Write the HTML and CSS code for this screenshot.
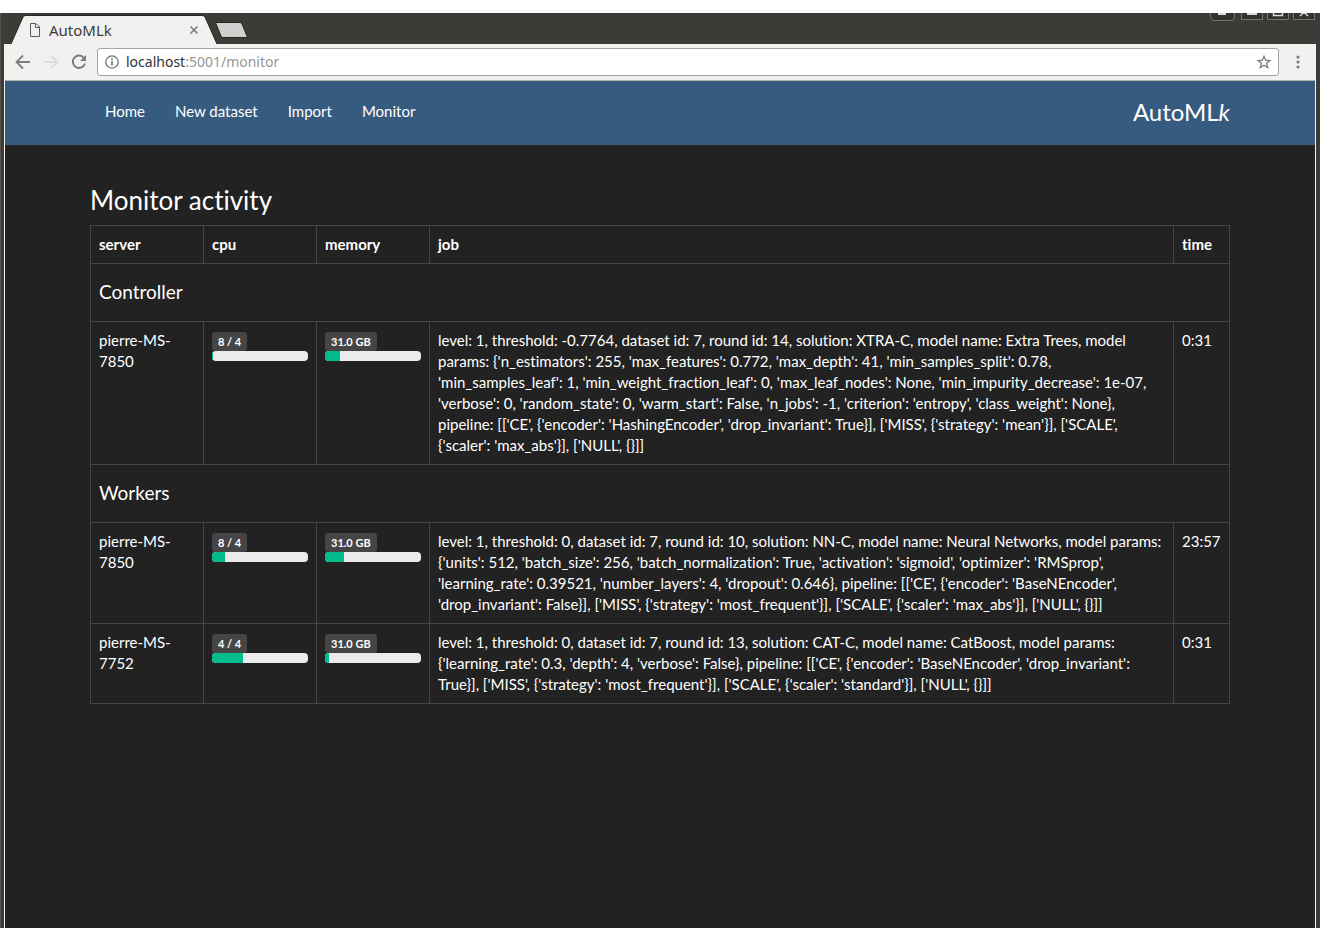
FILE: index.html
```html
<!DOCTYPE html>
<html lang="en">
<head>
<meta charset="utf-8">
<title>AutoMLk</title>
<link rel="stylesheet" href="styles.css">
</head>
<body>
<div class="window">
  <div class="tabstrip">
    <div class="tab">
      <svg class="tab-shape" width="210" height="31" viewBox="0 0 210 31" aria-hidden="true"><path d="M0 31L12 4Q13 2.500 15 2.500H191Q193 2.500 194 4L206 31" fill="#f2f1ef" stroke="#282724" stroke-width="1"/></svg>
      <svg class="tab-doc" width="12" height="16" viewBox="0 0 12 16" aria-hidden="true"><path d="M1.500 1.500H7L10.500 5V14.500H1.500ZM6.500 1.500V5.500H10.500" fill="none" stroke="#5a5a5a"/></svg>
      <span class="tab-title">AutoMLk</span>
      <button class="icon-btn" aria-label="Close tab"><svg width="10" height="10" viewBox="0 0 10 10"><path d="M1.500 1.500L8.500 8.500M8.500 1.500L1.500 8.500" stroke="#7b7a79" stroke-width="1.600"/></svg></button>
    </div>
    <button class="icon-btn new-tab" aria-label="New tab"><svg width="36" height="18" viewBox="0 0 36 18"><path d="M2.500 1.500H27Q28.500 1.500 29 3L34.500 16.500H10Q8.500 16.500 8 15Z" fill="#d0cfcd" stroke="#282724"/></svg></button>
    <svg class="win-buttons" width="106" height="9" viewBox="0 0 106 9" aria-hidden="true">
      <g fill="#33322e" stroke="#77756f"><path d="M.5-2V4Q.5 7.500 4 7.500H21Q24.500 7.500 24.500 4V-2"/><path d="M31.500-2V6.500H52.500V-2M57.500-2V6.500H78.500V-2M83.500-2V6.500H104.500V-2"/></g>
      <path d="M8 1H16M37 1H47" stroke="#dfdbd2" stroke-width="2"/><path d="M63.500-2V2.500H72.500V-2M90 3L94 -1L98 3" fill="none" stroke="#dfdbd2" stroke-width="1.500"/>
    </svg>
  </div>
  <div class="view">
    <div class="toolbar">
      <div class="nav-buttons">
        <button class="icon-btn" aria-label="Back"><svg width="16" height="16" viewBox="0 0 16 16"><path d="M15 8H2M8 1.500L1.500 8L8 14.500" fill="none" stroke="#7d7c7b" stroke-width="1.800"/></svg></button>
        <button class="icon-btn" aria-label="Forward"><svg width="16" height="16" viewBox="0 0 16 16"><path d="M1 8H14M8 1.500L14.500 8L8 14.500" fill="none" stroke="#dddcda" stroke-width="1.800"/></svg></button>
        <button class="icon-btn" aria-label="Reload"><svg width="16" height="16" viewBox="0 0 16 16"><path d="M13 4A6.200 6.200 0 1 0 14 9.500" fill="none" stroke="#7d7c7b" stroke-width="1.900"/><path d="M15 1V7H9Z" fill="#7d7c7b"/></svg></button>
      </div>
      <div class="address">
        <svg width="14" height="14" viewBox="0 0 14 14" aria-hidden="true"><circle cx="7" cy="7" r="6.200" fill="none" stroke="#747372" stroke-width="1.300"/><path d="M7 6V10.500M7 3.300V5" stroke="#747372" stroke-width="1.600"/></svg>
        <span class="url"><span class="host">localhost</span>:5001/monitor</span>
        <button class="icon-btn" aria-label="Bookmark this page"><svg width="14" height="14" viewBox="0 0 14 14"><path d="M7 1.300L8.600 5.200L12.900 5.500L9.600 8.300L10.700 12.500L7 10.200L3.300 12.500L4.400 8.300L1.100 5.500L5.400 5.200Z" fill="none" stroke="#7d7c7b" stroke-width="1.300"/></svg></button>
      </div>
      <button class="icon-btn menu" aria-label="Menu"><svg width="4" height="14" viewBox="0 0 4 14"><g fill="#7d7c7b"><circle cx="2" cy="2" r="1.600"/><circle cx="2" cy="7" r="1.600"/><circle cx="2" cy="12" r="1.600"/></g></svg></button>
    </div>
    <div class="page">
      <header class="navbar">
        <div class="container navbar-row">
          <nav class="links"><a href="#">Home</a><a href="#">New dataset</a><a href="#">Import</a><a href="#">Monitor</a></nav>
          <a class="brand" href="#">AutoML<i>k</i></a>
        </div>
      </header>
      <main class="container">
        <h1>Monitor activity</h1>
        <table class="activity">
          <colgroup><col class="col-narrow"><col class="col-narrow"><col class="col-narrow"><col><col class="col-time"></colgroup>
          <thead><tr><th>server</th><th>cpu</th><th>memory</th><th>job</th><th>time</th></tr></thead>
          <tbody>
            <tr><td colspan="5"><h2>Controller</h2></td></tr>
            <tr>
              <td>pierre-MS-7850</td>
              <td><div class="meter-label"><span class="badge">8 / 4</span></div><div class="progress"><div class="bar" style="width:1%"></div></div></td>
              <td><div class="meter-label"><span class="badge">31.0 GB</span></div><div class="progress"><div class="bar" style="width:16%"></div></div></td>
              <td>level: 1, threshold: -0.7764, dataset id: 7, round id: 14, solution: XTRA-C, model name: Extra Trees, model params: {'n_estimators': 255, 'max_features': 0.772, 'max_depth': 41, 'min_samples_split': 0.78, 'min_samples_leaf': 1, 'min_weight_fraction_leaf': 0, 'max_leaf_nodes': None, 'min_impurity_decrease': 1e-07, 'verbose': 0, 'random_state': 0, 'warm_start': False, 'n_jobs': -1, 'criterion': 'entropy', 'class_weight': None}, pipeline: [['CE', {'encoder': 'HashingEncoder', 'drop_invariant': True}], ['MISS', {'strategy': 'mean'}], ['SCALE', {'scaler': 'max_abs'}], ['NULL', {}]]</td>
              <td>0:31</td>
            </tr>
            <tr><td colspan="5"><h2>Workers</h2></td></tr>
            <tr>
              <td>pierre-MS-7850</td>
              <td><div class="meter-label"><span class="badge">8 / 4</span></div><div class="progress"><div class="bar" style="width:14%"></div></div></td>
              <td><div class="meter-label"><span class="badge">31.0 GB</span></div><div class="progress"><div class="bar" style="width:20%"></div></div></td>
              <td>level: 1, threshold: 0, dataset id: 7, round id: 10, solution: NN-C, model name: Neural Networks, model params: {'units': 512, 'batch_size': 256, 'batch_normalization': True, 'activation': 'sigmoid', 'optimizer': 'RMSprop', 'learning_rate': 0.39521, 'number_layers': 4, 'dropout': 0.646}, pipeline: [['CE', {'encoder': 'BaseNEncoder', 'drop_invariant': False}], ['MISS', {'strategy': 'most_frequent'}], ['SCALE', {'scaler': 'max_abs'}], ['NULL', {}]]</td>
              <td>23:57</td>
            </tr>
            <tr>
              <td>pierre-MS-7752</td>
              <td><div class="meter-label"><span class="badge">4 / 4</span></div><div class="progress"><div class="bar" style="width:32%"></div></div></td>
              <td><div class="meter-label"><span class="badge">31.0 GB</span></div><div class="progress"><div class="bar" style="width:4%"></div></div></td>
              <td>level: 1, threshold: 0, dataset id: 7, round id: 13, solution: CAT-C, model name: CatBoost, model params: {'learning_rate': 0.3, 'depth': 4, 'verbose': False}, pipeline: [['CE', {'encoder': 'BaseNEncoder', 'drop_invariant': True}], ['MISS', {'strategy': 'most_frequent'}], ['SCALE', {'scaler': 'standard'}], ['NULL', {}]]</td>
              <td>0:31</td>
            </tr>
          </tbody>
        </table>
      </main>
    </div>
  </div>
</div>
</body>
</html>
```

FILE: styles.css
```css
* { box-sizing: border-box; }

body {
  margin: 0;
  padding: 13px 0;
  min-height: 100vh;
  display: flex;
  background: #fff;
  color: #fff;
  font: 15px/21px Lato, sans-serif;
  font-variant-ligatures: none;
}

a { color: inherit; text-decoration: none; }

/* Browser window */
.window {
  flex: 1;
  min-width: 0;
  display: flex;
  flex-direction: column;
  padding: 0 4px 0 3px;
  background: #3c3b37;
  border-left: 1px solid #55534e;
}

.icon-btn {
  display: flex;
  padding: 0;
  border: 0;
  background: none;
}

.tabstrip {
  display: flex;
  align-items: flex-start;
  height: 31px;
  padding-left: 7px;
}

.tab {
  position: relative;
  display: flex;
  align-items: center;
  width: 202px;
  height: 31px;
  padding: 3px 14px 0 18px;
  color: #3c3b3a;
  font-family: "Noto Sans", sans-serif;
  font-size: 15px;
  line-height: 20px;
}

.tab-shape { position: absolute; left: 0; top: 0; }
.tab-doc, .tab-title, .tab .icon-btn { position: relative; }
.tab-title { flex: 1; margin-left: 8px; }
.new-tab { margin-top: 8px; }
.win-buttons { margin-left: auto; }

.view {
  flex: 1;
  display: flex;
  flex-direction: column;
  border: 1px solid #f2f1ef;
  border-width: 0 1px;
  background: #222;
}

.toolbar {
  display: flex;
  align-items: center;
  height: 37px;
  padding: 0 15px 0 10px;
  background: #f2f1ef;
  border-bottom: 1px solid #b4b2ae;
}

.nav-buttons { display: flex; gap: 12px; }

.address {
  flex: 1;
  display: flex;
  align-items: center;
  gap: 7px;
  height: 28px;
  margin-left: 10px;
  padding: 0 7px;
  background: #fff;
  border: 1px solid #a5a4a2;
  border-radius: 3px;
  font-family: "Noto Sans", sans-serif;
  font-size: 14px;
  line-height: 20px;
}

.url { flex: 1; color: #969696; }
.host { color: #333; }
.menu { margin-left: 17px; }

/* Page */
.page { flex: 1; }

.container {
  max-width: 1140px;
  margin: 0 auto;
}

.navbar { background: #375a7f; }

.navbar-row {
  display: flex;
  align-items: center;
  justify-content: space-between;
  height: 64px;
  padding-bottom: 3px;
}

.links { display: flex; gap: 30px; padding-left: 15px; }
.brand { font-size: 24px; line-height: 24px; }

h1, h2 { font-weight: 400; }

h1 {
  margin: 40px 0 10px;
  font-size: 26px;
  line-height: 30px;
}

h2 {
  margin: 9px 0 11px;
  font-size: 19px;
  line-height: 21px;
}

.activity {
  width: 100%;
  table-layout: fixed;
  border-collapse: collapse;
}

.activity th, .activity td {
  padding: 8px;
  border: 1px solid #464545;
  text-align: left;
  vertical-align: top;
}

.col-narrow { width: 113px; }
.col-time { width: 56px; }

.meter-label { display: flex; height: 21px; padding-top: 2px; }

.badge {
  padding: 0 6px;
  border-radius: 3px;
  background: #464545;
  font-size: 11px;
  font-weight: 700;
  line-height: 19px;
}

.progress {
  height: 10px;
  border-radius: 4px;
  overflow: hidden;
  background: #ebebeb;
}

.bar { height: 100%; background: #00bc8c; }
```
